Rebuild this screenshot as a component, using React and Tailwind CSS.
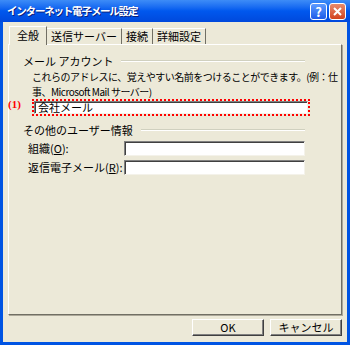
import React from "react";

const Tab = ({ label, active }) =>
  active ? (
    <div className="relative z-10 -mb-px flex h-[19px] items-center border-l border-t border-r border-l-white border-t-white border-r-[#716f64] bg-[#ece9d8] px-[7px] pb-[1px]">
      {label}
    </div>
  ) : (
    <div className="flex h-[16px] items-center border-t border-r border-t-white border-r-[#716f64] px-[4px]">
      {label}
    </div>
  );

const GroupHeader = ({ label }) => (
  <div className="flex h-[12px] items-center pl-[14px]">
    <span className="leading-[12px]">{label}</span>
    <div className="ml-[8px] flex-1 border-t border-b border-t-[#d0d0bf] border-b-white" />
  </div>
);

const Field = ({ children, className }) => (
  <div
    className={
      "bg-white border-t border-l border-r border-b border-t-[#808080] border-l-[#808080] border-r-[#f4f2ea] border-b-[#f4f2ea] shadow-[inset_1px_1px_0_#404040] " +
      (className || "")
    }
  >
    {children}
  </div>
);

export default function App() {
  return (
    <div className="flex h-[345px] w-[350px] flex-col overflow-hidden bg-[#0054e3] font-['Noto_Sans_CJK_JP','Noto_Sans',sans-serif] text-[11px] text-black">
      {/* title bar */}
      <div className="flex h-[22px] items-center bg-gradient-to-b from-[#3d8cf7] via-[#0058ee] to-[#0048dc] pl-[7px] pr-[4px]">
        <span className="flex-1 text-[10.5px] font-bold tracking-[-1.2px] text-white [text-shadow:1px_1px_0_#0a1e7a]">
          インターネット電子メール設定
        </span>
        <div className="flex gap-[2px]">
          <div className="flex h-[17px] w-[17px] items-center justify-center rounded-[3px] border border-white bg-gradient-to-b from-[#5d9bff] to-[#1e5ae8] text-[13px] font-bold leading-none text-white">
            ?
          </div>
          <div className="flex h-[17px] w-[17px] items-center justify-center rounded-[3px] border border-white bg-gradient-to-b from-[#e88a6b] to-[#d2411b]">
            <svg width="9" height="9" viewBox="0 0 9 9">
              <path d="M1 1L8 8M8 1L1 8" stroke="white" strokeWidth="2" />
            </svg>
          </div>
        </div>
      </div>

      {/* body */}
      <div className="mx-[3px] mb-[3px] flex flex-1 flex-col bg-[#ece9d8] pt-[4px] pb-[6px]">
        {/* tabs */}
        <div className="flex h-[18px] items-end pl-[6px]">
          <Tab label="全般" active />
          <Tab label="送信サーバー" />
          <Tab label="接続" />
          <Tab label="詳細設定" />
        </div>

        {/* panel */}
        <div className="relative ml-[5px] mr-[5px] h-[271px] border-t border-l border-r border-b border-t-white border-l-white border-r-[#716f64] border-b-[#716f64] pr-[36px] pt-[10px] shadow-[1px_1px_0_#aca899]">
          <GroupHeader label="メール アカウント" />
          <div className="mt-[3px] whitespace-nowrap pl-[23px] text-[10px] leading-[14.5px] tracking-[-0.5px]">
            これらのアドレスに、覚えやすい名前をつけることができます。(例：仕
            <br />
            事、Microsoft Mail サーバー)
          </div>
          <div className="ml-[23px] mr-[-5px] border-2 border-dotted border-[#ff0000]">
            <Field className="flex h-[13px] items-center pl-[3px] leading-none">
              会社メール
            </Field>
          </div>
          <span className="absolute left-[-1px] top-[51px] font-['Liberation_Serif',serif] text-[11px] font-bold text-[#ff0000]">
            (1)
          </span>

          <div className="mt-[8px]">
            <GroupHeader label="その他のユーザー情報" />
          </div>
          <div className="mt-[5px] flex items-center pl-[19px] leading-[15px]">
            <span className="w-[96px]">組織(<span className="underline">O</span>):</span>
            <Field className="h-[15px] flex-1" />
          </div>
          <div className="mt-[4px] flex items-center pl-[19px] leading-[15px]">
            <span className="w-[96px]">返信電子メール(<span className="underline">R</span>):</span>
            <Field className="h-[15px] flex-1" />
          </div>
        </div>

        {/* buttons */}
        <div className="mt-[4px] flex justify-end gap-[6px] pr-[5px]">
          <button className="h-[17px] w-[72px] border border-t-white border-l-white border-r-[#404040] border-b-[#404040] bg-[#ece9d8] text-[11px] leading-none shadow-[inset_-1px_-1px_0_#808080]">
            OK
          </button>
          <button className="h-[17px] w-[72px] border border-t-white border-l-white border-r-[#404040] border-b-[#404040] bg-[#ece9d8] text-[11px] leading-none shadow-[inset_-1px_-1px_0_#808080]">
            キャンセル
          </button>
        </div>
      </div>
    </div>
  );
}
